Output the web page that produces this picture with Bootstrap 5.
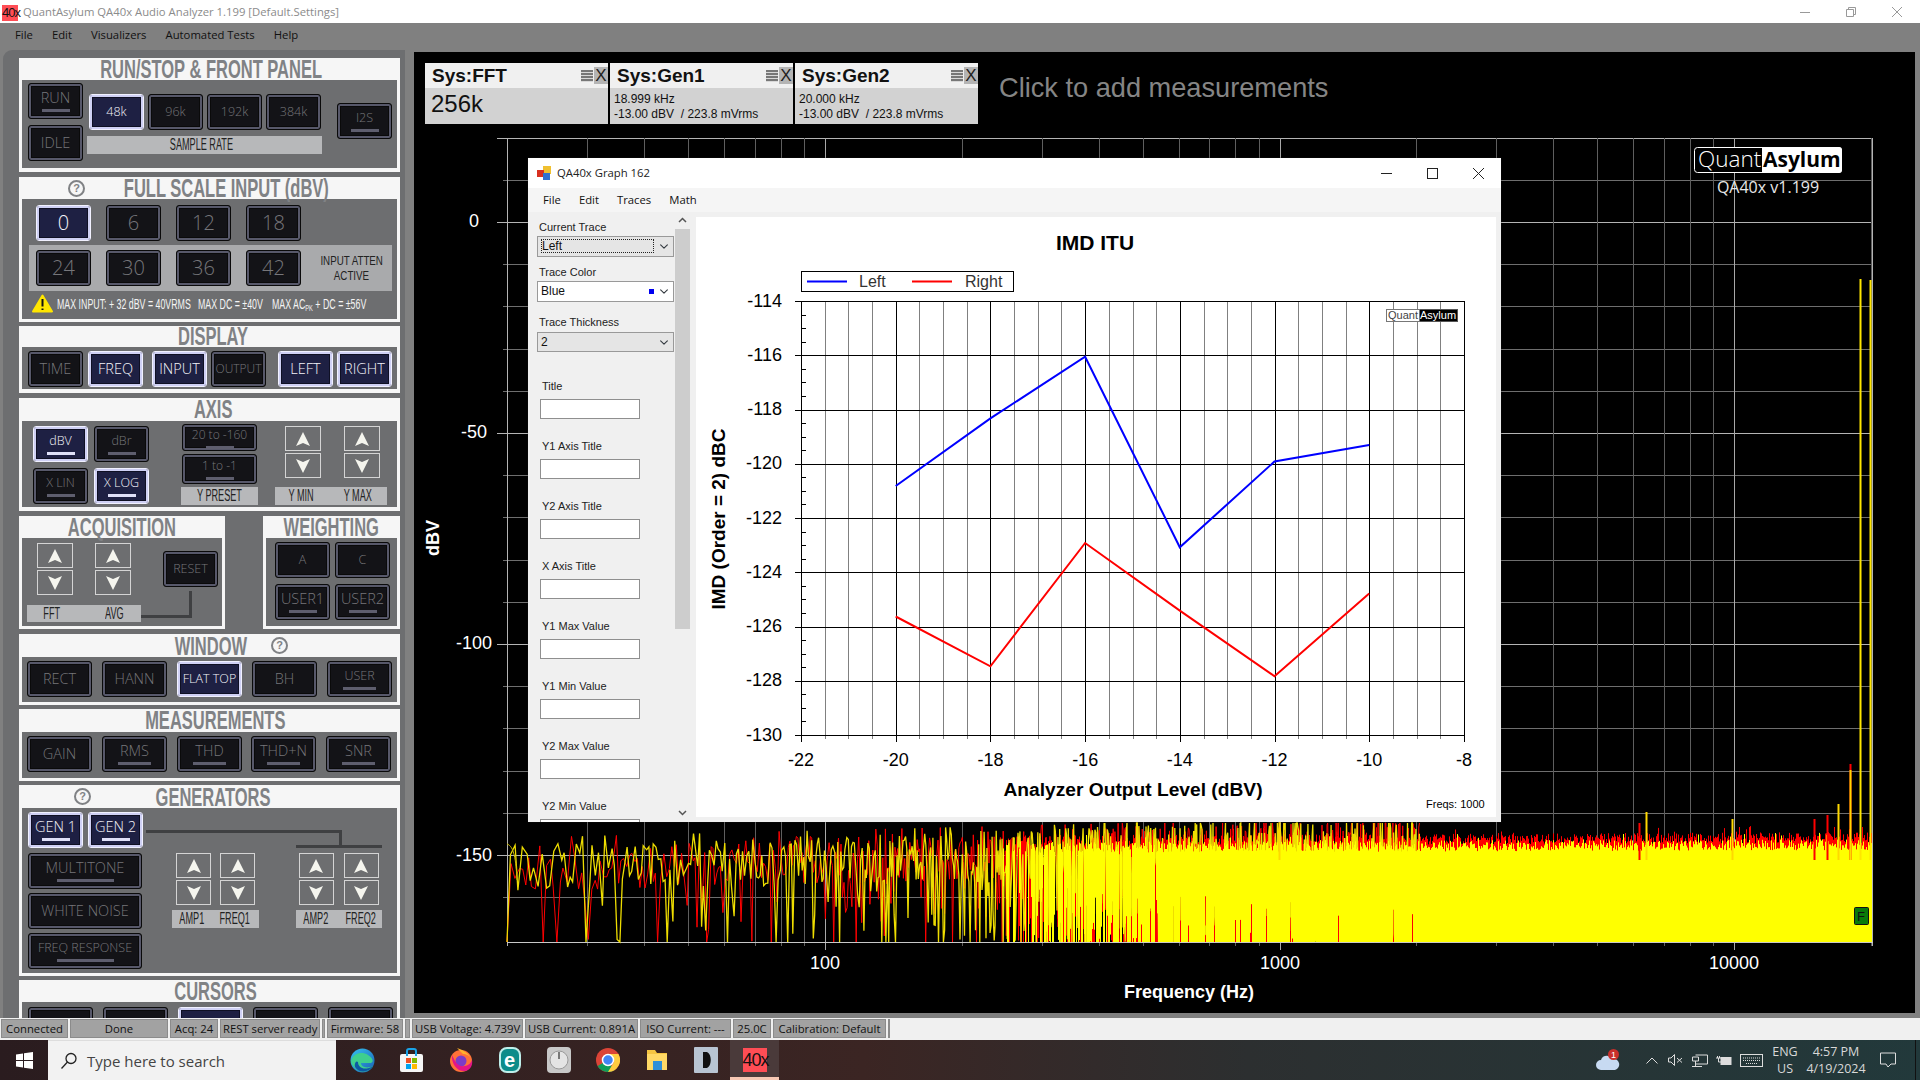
<!DOCTYPE html>
<html lang="en">
<head>
<meta charset="UTF-8">
<title>QuantAsylum QA40x Audio Analyzer</title>
<link href="https://cdn.jsdelivr.net/npm/bootstrap@5.3.0/dist/css/bootstrap.min.css" rel="stylesheet">
<script src="https://cdn.jsdelivr.net/npm/bootstrap@5.3.0/dist/js/bootstrap.bundle.min.js"></script>
<style>
html, body { width: 1920px; height: 1080px; overflow: hidden; margin: 0; }
body { font-family: "Open Sans", "Liberation Sans", sans-serif; font-size: 11.3px; background: #808080; color: #111; line-height: 1.2; }

/* window chrome */
.titlebar { height: 23px; background: #fff; color: #8b8b8b; }
.app-ico { width: 16px; height: 16px; margin: 2px 5px 0 2px; background: #ff4d55; color: #111; font: 13px/16px "Liberation Sans", sans-serif; text-align: center; letter-spacing: -1px; overflow: visible; }
.win-btn { width: 46px; display: flex; justify-content: center; }
.menubar { height: 27px; background: #808080; padding: 0 0 3px 15px; gap: 19px; color: #111; }
.middle { height: 968px; }

/* left panel */
.panel { width: 414px; height: 968px; overflow: hidden; padding-left: 3px; padding-right: 9px; flex: none; }
.pan { height: 100%; background: #6d6e70; border-top-left-radius: 9px; padding: 8px 0 0 16px; }
.sec { width: 381px; background: #f6f6f6; padding: 0 3px 3px; }
.sec + .sec, .sec-row + .sec { margin-top: 4px; }
.sec-row { width: 381px; margin-top: 5px; }
.sec-row .sec { margin-top: 0; }
.ttl { height: 22px; color: #808285; font: 700 25px/22px "Liberation Sans", sans-serif; }
.cond { display: inline-block; white-space: nowrap; transform: scaleX(.66); }
.tc { flex: 1 1 0; min-width: 0; display: flex; justify-content: center; }
.sbody { background: #6d6e70; }
.help { width: 17px; height: 17px; border: 2px solid #808285; border-radius: 50%; color: #808285; font: 700 11px/13px "Liberation Sans", sans-serif; text-align: center; flex: none; }

.btn.qb { width: 55px; height: 36px; padding: 0; flex: none; display: flex; flex-direction: column; align-items: center; justify-content: center;
  background: #131317; border: 1px solid #0a0a0a; border-radius: 3px; box-shadow: inset 0 0 0 2px #57586a, inset 0 0 0 3px #0a0a0a;
  color: #76767a; font: 300 14.5px/16px "Open Sans", "Liberation Sans", sans-serif; white-space: nowrap; }
.btn.qb.on { background: #1e2043; border-color: #f1f1ff; box-shadow: inset 0 0 0 2px #cfd0f4, inset 0 0 0 3px #0f1024; color: #f4f4fa; }
.btn.qb.u::after { content: ""; width: 28px; height: 3px; margin-top: 3px; background: #5e5e6e; }
.btn.qb.on.u::after { background: #dfe0f8; }
.btn.qb.num { font-size: 20px; }
.btn.qb.w65 { width: 65px; }
.btn.qb.w65.u::after { width: 33px; }
.btn.qb.wide { width: 114px; }
.btn.qb.wide.u::after { width: 57px; }
.btn.qb.small { font-size: 12.5px; }
.btn.qb.tiny { font-size: 12px; }
.ar { width: 36px; height: 25px; border: 1px solid #d4d4d4; display: flex; align-items: center; justify-content: center; flex: none; }
.ar svg { width: 16px; height: 16px; fill: #f5f5ee; }
.ar.n { width: 35px; }
.ar-col { display: flex; flex-direction: column; gap: 2px; }
.strip { background: #b7b8ba; height: 18px; color: #222; font: 16px/18px "Liberation Sans", sans-serif; display: flex; }
.strip > span { display: flex; justify-content: center; }
.strip .cond { transform: scaleX(.57); }
.wire { border: 0 solid #3f4042; }

/* individual sections */
#s1 { padding-bottom: 4px; }
#s1 .sbody { height: 88px; padding: 3px 0 0 6px; }
#s1 .ttl { padding-left: 3px; }
#s2 { margin-top: 5px; }
#s2 .ttl { padding-right: 30px; }
#s2 .help { margin-left: 46px; }
#s2 .sbody { height: 120px; padding: 6px 0 0 14px; }
#s2 .atten { width: 363px; height: 46px; margin: 4px 0 0 -7px; padding: 5px 0 0 7px; background: #a9aaac; }
.atten .lab { flex: 1 1 0; min-width: 0; padding: 3px 5px 0 0; color: #222; font: 13px/15px "Liberation Sans", sans-serif; }
.atten .lab div { display: flex; justify-content: center; }
.atten .cond { transform: scaleX(.75); }
.note { margin: 3px 0 0 -4px; height: 20px; color: #f4f4f4; font: 14px/20px "Liberation Sans", sans-serif; }
.note span { display: block; white-space: nowrap; transform: scaleX(.63); transform-origin: left; flex: none; }
.note sub { font-size: 9px; }
#s3 { padding-bottom: 4px; }
#s3 .ttl { height: 21px; line-height: 21px; padding-left: 8px; }
#s3 .sbody { height: 42px; padding: 4px 0 0 6px; }
#s4, .sec-row { margin-top: 5px; }
#s4 { padding-bottom: 4px; }
#s4 .ttl { height: 23px; padding-left: 8px; }
#s4 .sbody { height: 86px; padding: 5px 0 0 11px; }
.s5a { width: 206px; } .s5b { width: 137px; }
.s5a .sbody { height: 88px; padding: 5px 0 0 15px; }
.s5b .sbody { height: 88px; padding: 4px 0 0 9px; }
#s6 { margin-top: 5px; }
#s6 .ttl, #s7 .ttl, #s8 .ttl { height: 23px; }
#s6 .tc { flex: none; width: 290px; padding-left: 88px; }
#s6 .help { margin-left: -41px; }
#s6 .sbody { height: 45px; padding: 4px 0 0 5px; }
#s7 .sbody { height: 46px; padding: 4px 0 0 5px; }
#s8 .sbody { height: 165px; padding: 4px 0 0 6px; }
#s9 .sbody { padding: 5px 0 0 6px; height: 60px; }

/* main area */
.main { width: 1501px; height: 961px; margin-top: 2px; background: #000; position: relative; flex: none; }
.cards { height: 78px; padding: 11px 0 0 11px; gap: 2px; }
.card-m { width: 183px; height: 61px; background: #d2d2d2; color: #111; font-family: "Liberation Sans", sans-serif; }
.card-m .hd { height: 25px; background: #f0f0f0; font: 700 19px/25px "Liberation Sans", sans-serif; padding-left: 7px; }
.card-m .x { width: 14px; height: 17px; background: #b4b4b4; margin-left: 1px; text-align: center; font: 400 17px/17px "Liberation Sans", sans-serif; color: #222; }
.card-m .burger { width: 12px; height: 12px; background: repeating-linear-gradient(#777 0 2px, #d8d8d8 2px 3px); }
.card-m .big { font-size: 24px; line-height: 30px; padding: 1px 0 0 6px; }
.card-m .sm { font-size: 12px; line-height: 15px; padding: 4px 0 0 4px; }
.clickadd { margin: 0 0 0 19px; color: #858585; font: 27.2px/50px "Liberation Sans", sans-serif; height: 50px; }
.spectrum { display: block; width: 1501px; height: 883px; }
svg text { font-family: "Liberation Sans", sans-serif; }

/* floating graph window */
.gwin { position: absolute; left: 114px; top: 106px; width: 973px; height: 664px; background: #f0f0f0; box-shadow: 0 0 1px #222; }
.gwin .gt { height: 30px; background: #fff; padding-left: 9px; color: #222; }
.gwin .gt .ico { margin-right: 6px; }
.gwin .gm { height: 24px; background: #f5f5f5; padding-left: 15px; gap: 18px; color: #111; }
.gpane { width: 146px; height: 610px; overflow: hidden; padding: 8px 0 0 9px; font: 11px/14px "Liberation Sans", sans-serif; color: #222; flex: none; }
.gpane label { display: block; margin: 0 0 0 2px; }
.gpane .form-select.combo { width: 137px; height: 21px; margin: 2px 0 8px; padding: 2px 3px; border: 1px solid #999; border-radius: 0; font: 12px/15px "Liberation Sans", sans-serif; background-color: #e5e5e5; background-position: right 4px center; background-size: 10px 9px; color: #111; }
.gpane .form-select.combo.wh { background-color: #fff; position: relative; margin-bottom: 13px; }
.gpane .form-select.combo.th3 { margin: 3px 0 27px; height: 20px; }
.combo .focus { display: block; width: 113px; height: 14px; border: 1px dotted #222; line-height: 12px; }
.combo .sw { position: absolute; right: 19px; top: 7px; width: 5px; height: 5px; background: #0000f0; }
.gpane .fld { margin: 0 0 0 3px; }
.gpane .form-control { width: 100px; height: 20px; min-height: 0; margin: 6px 0 20px; border: 1px solid #8f8f8f; border-radius: 0; padding: 0; background: #fff; }
.gscroll { width: 15px; height: 610px; margin-left: 1px; flex: none; }
.gscroll .th { height: 400px; margin-top: 0; background: #cdcdcd; }
.gscroll .ch { height: 17px; text-align: center; line-height: 14px; }
.gplot { width: 800px; height: 600px; margin: 5px 0 0 6px; background: #fff; display: block; flex: none; }

/* status + taskbar */
.status { height: 22px; background: #f0f0f0; padding: 1px 0 0 1px; gap: 2px; }
.status span { height: 19px; background: #a2a2a2; border: 1px solid #e4e4e4; outline: 1px solid #8b8b8b; outline-offset: -1px; color: #111; font-size: 11.3px; line-height: 17px; padding: 0 2px; white-space: nowrap; text-align: center; flex: none; }
.taskbar { height: 40px; background: linear-gradient(90deg, #2a1c1f 0, #3b2523 45%, #2c2f30 65%, #22393b 100%); color: #eee; }
.t-start { width: 48px; }
.t-search { width: 288px; background: #f2f2f2; color: #444; font-size: 15px; padding-left: 12px; gap: 9px; border-top: 1px solid #ddd; }
.t-ico { width: 49px; height: 40px; display: flex; align-items: center; justify-content: center; flex: none; }
.t-ico.cur { background: #4a3a3a; border-bottom: 3px solid #f7c8b4; padding-top: 3px; }
.t-40x { width: 24px; height: 24px; background: #ff4d55; color: #111; font: 18px/24px "Liberation Sans", sans-serif; text-align: center; letter-spacing: -1px; }
.tray { margin-left: auto; width: 321px; border-right: 1px solid #111; margin-right: 4px; font-size: 12.5px; line-height: 17px; text-align: center; color: #d8d8d8; flex: none; }
.tray > * { flex: none; }
</style>
</head>
<body>
<svg width="0" height="0" class="d-block position-absolute">
  <symbol id="up" viewBox="0 0 16 16"><path d="M8 1 L15 15 L8 12 L1 15Z"/></symbol>
  <symbol id="dn" viewBox="0 0 16 16"><path d="M8 15 L15 1 L8 4 L1 1Z"/></symbol>
</svg>

<div class="titlebar d-flex align-items-center">
  <div class="app-ico">40x</div>
  <div class="flex-grow-1">QuantAsylum QA40x Audio Analyzer 1.199 [Default.Settings]</div>
  <div class="win-btn"><svg width="10" height="10"><path d="M0 5.5H10" stroke="#999"/></svg></div>
  <div class="win-btn"><svg width="10" height="10" fill="none" stroke="#999"><path d="M.5 2.5h7v7h-7zM2.5 2.5v-2h7v7h-2"/></svg></div>
  <div class="win-btn"><svg width="10" height="10" stroke="#999"><path d="M0 0L10 10M10 0L0 10"/></svg></div>
</div>
<div class="menubar d-flex align-items-center"><span>File</span><span>Edit</span><span>Visualizers</span><span>Automated Tests</span><span>Help</span></div>

<div class="middle d-flex">
  <div class="panel">
    <div class="pan">
      <div class="sec" id="s1">
        <div class="ttl d-flex justify-content-center"><span class="cond">RUN/STOP &amp; FRONT PANEL</span></div>
        <div class="sbody d-flex">
          <div class="d-flex flex-column" style="gap:6px">
            <button class="btn qb u">RUN</button>
            <button class="btn qb">IDLE</button>
          </div>
          <div style="margin:11px 0 0 6px">
            <div class="d-flex" style="gap:4px">
              <button class="btn qb small on">48k</button>
              <button class="btn qb small">96k</button>
              <button class="btn qb small">192k</button>
              <button class="btn qb small">384k</button>
            </div>
            <div class="strip justify-content-center" style="width:235px;margin:6px 0 0 -2px;padding-right:6px"><span class="cond">SAMPLE RATE</span></div>
          </div>
          <button class="btn qb small u" style="margin:20px 0 0 15px">I2S</button>
        </div>
      </div>

      <div class="sec" id="s2">
        <div class="ttl d-flex align-items-center"><div class="help">?</div><div class="tc"><span class="cond">FULL SCALE INPUT (dBV)</span></div></div>
        <div class="sbody">
          <div class="d-flex" style="gap:15px">
            <button class="btn qb num on">0</button>
            <button class="btn qb num">6</button>
            <button class="btn qb num">12</button>
            <button class="btn qb num">18</button>
          </div>
          <div class="atten d-flex" style="gap:15px">
            <button class="btn qb num">24</button>
            <button class="btn qb num">30</button>
            <button class="btn qb num">36</button>
            <button class="btn qb num">42</button>
            <div class="lab"><div><span class="cond">INPUT ATTEN</span></div><div><span class="cond">ACTIVE</span></div></div>
          </div>
          <div class="note d-flex">
            <svg width="21" height="19" viewBox="0 0 21 19" class="flex-none"><path d="M10.5 1.5 L20 17.5 H1Z" fill="#ffe600" stroke="#ffe600" stroke-width="2" stroke-linejoin="round"/><path d="M10.5 5V12.5M10.5 14.5V16" stroke="#111" stroke-width="2"/></svg>
            <span style="width:127px;margin-left:4px">MAX INPUT: + 32 dBV = 40VRMS</span>
            <span style="width:61px;margin-left:14px">MAX DC = ±40V</span>
            <span style="width:89px;margin-left:13px">MAX AC<sub>PK</sub> + DC = ±56V</span>
          </div>
        </div>
      </div>

      <div class="sec" id="s3">
        <div class="ttl d-flex justify-content-center"><span class="cond">DISPLAY</span></div>
        <div class="sbody d-flex">
          <button class="btn qb">TIME</button>
          <button class="btn qb on" style="margin-left:5px">FREQ</button>
          <button class="btn qb on" style="margin-left:9px">INPUT</button>
          <button class="btn qb tiny" style="margin-left:4px">OUTPUT</button>
          <button class="btn qb on" style="margin-left:12px">LEFT</button>
          <button class="btn qb on" style="margin-left:4px">RIGHT</button>
        </div>
      </div>

      <div class="sec" id="s4">
        <div class="ttl d-flex justify-content-center"><span class="cond">AXIS</span></div>
        <div class="sbody d-flex">
          <div class="d-flex flex-column" style="gap:6px">
            <div class="d-flex" style="gap:6px"><button class="btn qb small u on">dBV</button><button class="btn qb small u">dBr</button></div>
            <div class="d-flex" style="gap:6px"><button class="btn qb small u">X LIN</button><button class="btn qb small u on">X LOG</button></div>
          </div>
          <div style="width:77px;margin:-2px 0 0 32px">
            <button class="btn qb tiny u" style="width:75px;height:27px;margin-left:1px">20 to -160</button>
            <button class="btn qb tiny u" style="width:75px;height:30px;margin:3px 0 0 1px">1 to -1</button>
            <div class="strip justify-content-center" style="margin-top:3px"><span class="cond">Y PRESET</span></div>
          </div>
          <div style="width:112px;margin-left:17px">
            <div class="d-flex" style="gap:23px;padding-left:10px">
              <div class="ar-col"><div class="ar"><svg><use href="#up"/></svg></div><div class="ar"><svg><use href="#dn"/></svg></div></div>
              <div class="ar-col"><div class="ar"><svg><use href="#up"/></svg></div><div class="ar"><svg><use href="#dn"/></svg></div></div>
            </div>
            <div class="strip" style="margin-top:9px;gap:5px"><span style="width:52px"><span class="cond">Y MIN</span></span><span style="width:52px"><span class="cond">Y MAX</span></span></div>
          </div>
        </div>
      </div>

      <div class="sec-row d-flex justify-content-between">
        <div class="sec s5a">
          <div class="ttl d-flex justify-content-center"><span class="cond">ACQUISITION</span></div>
          <div class="sbody d-flex">
            <div>
              <div class="d-flex" style="gap:22px">
                <div class="ar-col"><div class="ar"><svg><use href="#up"/></svg></div><div class="ar"><svg><use href="#dn"/></svg></div></div>
                <div class="ar-col"><div class="ar"><svg><use href="#up"/></svg></div><div class="ar"><svg><use href="#dn"/></svg></div></div>
              </div>
              <div class="strip" style="width:114px;margin:10px 0 0 -10px;height:17px;gap:12px"><span style="width:50px"><span class="cond">FFT</span></span><span style="width:50px"><span class="cond">AVG</span></span></div>
            </div>
            <div style="margin:8px 0 0 22px">
              <button class="btn qb small">RESET</button>
              <div class="wire" style="width:51px;height:27px;margin:4px 0 0 -22px;border-right-width:3px;border-bottom-width:3px"></div>
            </div>
          </div>
        </div>
        <div class="sec s5b">
          <div class="ttl d-flex justify-content-center"><span class="cond">WEIGHTING</span></div>
          <div class="sbody">
            <div class="d-flex" style="gap:5px"><button class="btn qb small">A</button><button class="btn qb small">C</button></div>
            <div class="d-flex" style="gap:5px;margin-top:6px"><button class="btn qb u">USER1</button><button class="btn qb u">USER2</button></div>
          </div>
        </div>
      </div>

      <div class="sec" id="s6">
        <div class="ttl d-flex align-items-center"><div class="tc"><span class="cond">WINDOW</span></div><div class="help">?</div></div>
        <div class="sbody d-flex" style="gap:10px">
          <button class="btn qb w65">RECT</button>
          <button class="btn qb w65">HANN</button>
          <button class="btn qb w65 small on">FLAT TOP</button>
          <button class="btn qb w65">BH</button>
          <button class="btn qb w65 small u">USER</button>
        </div>
      </div>

      <div class="sec" id="s7">
        <div class="ttl d-flex justify-content-center" style="padding-left:12px"><span class="cond">MEASUREMENTS</span></div>
        <div class="sbody d-flex" style="gap:10px">
          <button class="btn qb w65">GAIN</button>
          <button class="btn qb w65 u">RMS</button>
          <button class="btn qb w65 u">THD</button>
          <button class="btn qb w65 u" style="margin-left:-1px">THD+N</button>
          <button class="btn qb w65 u">SNR</button>
        </div>
      </div>

      <div class="sec" id="s8">
        <div class="ttl d-flex align-items-center"><div class="help" style="margin-left:52px">?</div><div class="tc" style="padding-right:62px"><span class="cond">GENERATORS</span></div></div>
        <div class="sbody d-flex">
          <div class="d-flex flex-column" style="gap:4px;width:114px">
            <div class="d-flex" style="gap:5px;margin-bottom:1px"><button class="btn qb u on">GEN 1</button><button class="btn qb u on">GEN 2</button></div>
            <button class="btn qb wide u">MULTITONE</button>
            <button class="btn qb wide">WHITE NOISE</button>
            <button class="btn qb wide small u">FREQ RESPONSE</button>
          </div>
          <div style="width:236px;margin-left:4px">
            <div class="wire" style="width:196px;height:15px;margin-top:18px;border-top-width:3px;border-right-width:3px"></div>
            <div class="wire" style="width:86px;margin-left:150px;border-top-width:3px"></div>
            <div class="d-flex" style="margin:5px 0 0 26px;gap:37px">
              <div style="width:87px">
                <div class="d-flex" style="gap:9px;padding-left:4px">
                  <div class="ar-col"><div class="ar n"><svg><use href="#up"/></svg></div><div class="ar n"><svg><use href="#dn"/></svg></div></div>
                  <div class="ar-col"><div class="ar n"><svg><use href="#up"/></svg></div><div class="ar n"><svg><use href="#dn"/></svg></div></div>
                </div>
                <div class="strip" style="margin-top:5px;gap:3px"><span style="width:40px"><span class="cond">AMP1</span></span><span style="width:40px"><span class="cond">FREQ1</span></span></div>
              </div>
              <div style="width:87px">
                <div class="d-flex" style="gap:10px;padding-left:3px">
                  <div class="ar-col"><div class="ar n"><svg><use href="#up"/></svg></div><div class="ar n"><svg><use href="#dn"/></svg></div></div>
                  <div class="ar-col"><div class="ar n"><svg><use href="#up"/></svg></div><div class="ar n"><svg><use href="#dn"/></svg></div></div>
                </div>
                <div class="strip" style="margin-top:5px;gap:5px"><span style="width:40px"><span class="cond">AMP2</span></span><span style="width:40px"><span class="cond">FREQ2</span></span></div>
              </div>
            </div>
          </div>
        </div>
      </div>

      <div class="sec" id="s9">
        <div class="ttl d-flex justify-content-center" style="padding-left:12px"><span class="cond">CURSORS</span></div>
        <div class="sbody d-flex" style="gap:10px">
          <button class="btn qb w65"></button>
          <button class="btn qb w65"></button>
          <button class="btn qb w65 on"></button>
          <button class="btn qb w65"></button>
          <button class="btn qb w65"></button>
        </div>
      </div>
    </div>
  </div>

  <div class="main">
    <div class="cards d-flex align-items-start">
      <div class="card-m">
        <div class="hd d-flex align-items-center"><span class="flex-grow-1">Sys:FFT</span><span class="burger"></span><span class="x">X</span></div>
        <div class="big">256k</div>
      </div>
      <div class="card-m">
        <div class="hd d-flex align-items-center"><span class="flex-grow-1">Sys:Gen1</span><span class="burger"></span><span class="x">X</span></div>
        <div class="sm">18.999 kHz<br>-13.00 dBV &nbsp;/ 223.8 mVrms</div>
      </div>
      <div class="card-m">
        <div class="hd d-flex align-items-center"><span class="flex-grow-1">Sys:Gen2</span><span class="burger"></span><span class="x">X</span></div>
        <div class="sm">20.000 kHz<br>-13.00 dBV &nbsp;/ 223.8 mVrms</div>
      </div>
      <div class="clickadd">Click to add measurements</div>
    </div>

    <svg class="spectrum" viewBox="414 130 1501 883">
      <g id="specGrid"></g>
      <g id="specTrace"></g>
      <g fill="#fff" font-size="18" text-anchor="middle">
        <text x="474" y="227">0</text>
        <text x="474" y="438">-50</text>
        <text x="474" y="649">-100</text>
        <text x="474" y="861">-150</text>
        <text x="825" y="969">100</text>
        <text x="1280" y="969">1000</text>
        <text x="1734" y="969">10000</text>
        <text x="1189" y="998" font-weight="700">Frequency (Hz)</text>
        <text transform="rotate(-90 439 538)" x="439" y="538" font-weight="700">dBV</text>
      </g>
      <g>
        <rect x="1694.500" y="147.500" width="147" height="25" rx="3" fill="#000" stroke="#fff"/>
        <path d="M1762 147h77a3 3 0 0 1 3 3v20a3 3 0 0 1 -3 3h-77z" fill="#fff"/>
        <text x="1698" y="167" fill="#fff" font-size="22.500" style="font-family:'Open Sans',sans-serif;font-weight:300">Quant</text>
        <text x="1763" y="167" fill="#000" font-size="21" font-weight="700" style="font-family:'Open Sans',sans-serif">Asylum</text>
        <text x="1768" y="193" fill="#e8e8e8" font-size="16" text-anchor="middle" style="font-family:'Open Sans',sans-serif">QA40x v1.199</text>
      </g>
      <rect x="1854.500" y="907.500" width="14" height="17" rx="1" fill="#0a7a0a" stroke="#111"/>
      <text x="1857" y="921" font-size="13" fill="#111">F</text>
    </svg>

    <div class="gwin">
      <div class="gt d-flex align-items-center">
        <svg width="14" height="14" viewBox="0 0 14 14" class="ico"><rect x="6" width="8" height="8" fill="#f0c030"/><rect y="4" width="7" height="7" fill="#d83020"/><rect x="6" y="7" width="7" height="7" fill="#3070d0"/></svg>
        <span class="flex-grow-1">QA40x Graph 162</span>
        <div class="win-btn"><svg width="11" height="11"><path d="M0 5.500H11" stroke="#222"/></svg></div>
        <div class="win-btn"><svg width="11" height="11" fill="none" stroke="#222"><rect x=".5" y=".5" width="10" height="10"/></svg></div>
        <div class="win-btn"><svg width="11" height="11" stroke="#222"><path d="M0 0L11 11M11 0L0 11"/></svg></div>
      </div>
      <div class="gm d-flex align-items-center"><span>File</span><span>Edit</span><span>Traces</span><span>Math</span></div>
      <div class="d-flex">
        <div class="gpane">
          <label>Current Trace</label>
          <div class="form-select combo"><span class="focus">Left</span></div>
          <label>Trace Color</label>
          <div class="form-select combo wh">Blue<span class="sw"></span></div>
          <label>Trace Thickness</label>
          <div class="form-select combo th3">2</div>
          <div class="fld"><label>Title</label><input class="form-control"></div>
          <div class="fld"><label>Y1 Axis Title</label><input class="form-control"></div>
          <div class="fld"><label>Y2 Axis Title</label><input class="form-control"></div>
          <div class="fld"><label>X Axis Title</label><input class="form-control"></div>
          <div class="fld"><label>Y1 Max Value</label><input class="form-control"></div>
          <div class="fld"><label>Y1 Min Value</label><input class="form-control"></div>
          <div class="fld"><label>Y2 Max Value</label><input class="form-control"></div>
          <div class="fld"><label>Y2 Min Value</label><input class="form-control"></div>
        </div>
        <div class="gscroll d-flex flex-column">
          <div class="ch"><svg width="9" height="6" fill="none" stroke="#555" stroke-width="1.500"><path d="M1 5L4.500 1.500L8 5"/></svg></div>
          <div class="th"></div>
          <div class="flex-grow-1"></div>
          <div class="ch"><svg width="9" height="6" fill="none" stroke="#555" stroke-width="1.500"><path d="M1 1L4.500 4.500L8 1"/></svg></div>
        </div>
        <svg class="gplot" viewBox="696 217 800 600">
          <g id="imdGrid"></g>
          <polyline fill="none" stroke="#0000ff" stroke-width="2" points="895.700,486 990.400,418.400 1085.100,356.700 1179.800,547.300 1274.500,461.500 1369.200,444.900"/>
          <polyline fill="none" stroke="#ff0000" stroke-width="2" points="895.700,616.500 990.400,666.300 1085.100,543 1179.800,610.600 1274.500,676.200 1369.200,593.600"/>
          <g fill="#000">
            <text x="1095" y="250" font-size="21" font-weight="700" text-anchor="middle">IMD ITU</text>
            <text x="1133" y="796" font-size="19.200" font-weight="700" text-anchor="middle">Analyzer Output Level (dBV)</text>
            <text transform="rotate(-90 725 519)" x="725" y="519" font-size="19" font-weight="700" text-anchor="middle">IMD (Order = 2) dBC</text>
            <text x="1426" y="808" font-size="11">Freqs: 1000</text>
          </g>
          <rect x="801.500" y="271.500" width="212" height="20" fill="#fff" stroke="#000"/>
          <path d="M807 281.500H847" stroke="#0000ff" stroke-width="2"/>
          <path d="M912 281.500H952" stroke="#ff0000" stroke-width="2"/>
          <text x="859" y="287" font-size="16" fill="#333">Left</text>
          <text x="965" y="287" font-size="16" fill="#333">Right</text>
          <rect x="1386.500" y="309.500" width="71" height="12" fill="#000" stroke="#555"/>
          <rect x="1386.500" y="309.500" width="33" height="12" fill="#fff" stroke="#777"/>
          <text x="1388" y="319" font-size="11" fill="#444">Quant</text>
          <text x="1420" y="319" font-size="11" fill="#fff">Asylum</text>
        </svg>
      </div>
    </div>
  </div>
</div>

<div class="status d-flex">
  <span style="width:67px">Connected</span>
  <span style="width:98px">Done</span>
  <span style="width:48px">Acq: 24</span>
  <span style="width:100px">REST server ready</span>
  <span style="width:3px;padding:0"></span>
  <span style="width:76px">Firmware: 58</span>
  <span style="width:5px;padding:0"></span>
  <span style="width:111px">USB Voltage: 4.739V</span>
  <span style="width:113px">USB Current: 0.891A</span>
  <span style="width:91px">ISO Current: ---</span>
  <span style="width:38px">25.0C</span>
  <span style="width:113px">Calibration: Default</span>
  <span style="width:2px;padding:0"></span>
</div>

<div class="taskbar d-flex">
  <div class="t-start d-flex align-items-center justify-content-center">
    <svg width="17" height="17" viewBox="0 0 17 17" fill="#fff"><path d="M0 2.400L7 1.400V8H0zM8 1.300L17 0V8H8zM0 9H7V15.600L0 14.600zM8 9H17V17L8 15.700z"/></svg>
  </div>
  <div class="t-search d-flex align-items-center">
    <svg width="18" height="18" viewBox="0 0 18 18" fill="none" stroke="#222" stroke-width="1.300"><circle cx="11" cy="6.500" r="5"/><path d="M7.500 10L1.500 16.500"/></svg>
    <span>Type here to search</span>
  </div>
  <div style="width:2px"></div>
  <div class="t-ico"><svg width="25" height="25" viewBox="0 0 25 25"><defs><linearGradient id="eg" x1="0" y1="0" x2="1" y2="1"><stop offset="0" stop-color="#35c1f1"/><stop offset="1" stop-color="#1b5fb4"/></linearGradient></defs><circle cx="12.500" cy="12.500" r="12" fill="url(#eg)"/><path d="M1 13C3 5 12 3 18 7C23 10 24 14 21 15H11C11 19 17 21 23 18C20 24 10 26 5 20C3 18 1 16 1 13Z" fill="#3ecf8e"/><path d="M8 14C8 20 15 23 23 18C20 24 9 26 5 19C4 16 6 12 8 14Z" fill="#0c59a4"/></svg></div>
  <div class="t-ico"><svg width="25" height="25" viewBox="0 0 25 25"><rect x="1" y="6" width="23" height="18" rx="2" fill="#f6f6f6"/><path d="M8 8V3a2 2 0 0 1 2-2h5a2 2 0 0 1 2 2v5" fill="none" stroke="#1aa3e8" stroke-width="2"/><rect x="7" y="10" width="5" height="5" fill="#f25022"/><rect x="13" y="10" width="5" height="5" fill="#7fba00"/><rect x="7" y="16" width="5" height="5" fill="#00a4ef"/><rect x="13" y="16" width="5" height="5" fill="#ffb900"/></svg></div>
  <div class="t-ico"><svg width="24" height="26" viewBox="0 0 24 26"><circle cx="12" cy="14" r="11" fill="#ff7139"/><path d="M8 1C15 3 22 8 23 14C22 9 18 7 14 7Z" fill="#ffb32c"/><circle cx="12" cy="14" r="5.500" fill="#7d3bc8"/><path d="M3 8C2 16 8 25 16 24C22 23 24 17 23 13C21 20 10 22 6 14Z" fill="#e31587"/></svg></div>
  <div class="t-ico"><div class="d-flex align-items-center justify-content-center" style="width:22px;height:26px;border-radius:8px;background:#0d8c8a;border:2px solid #bfeeea;color:#fff;font:700 20px/1 'Liberation Sans',sans-serif">e</div></div>
  <div class="t-ico"><svg width="24" height="26" viewBox="0 0 24 26"><rect width="24" height="26" rx="4" fill="#c8c8c8"/><circle cx="12" cy="13" r="9" fill="#e4e4e4" stroke="#999"/><path d="M12 5V12" stroke="#777" stroke-width="2"/></svg></div>
  <div class="t-ico"><svg width="24" height="24" viewBox="0 0 24 24"><circle cx="12" cy="12" r="12" fill="#db4437"/><path d="M12 12L1.600 18A12 12 0 0 0 18 22.400Z" fill="#0f9d58"/><path d="M12 6H22.400A12 12 0 0 1 12 24L18 14Z" fill="#ffcd40"/><circle cx="12" cy="12" r="5.500" fill="#4285f4" stroke="#fff" stroke-width="1.500"/></svg></div>
  <div class="t-ico"><svg width="22" height="24" viewBox="0 0 22 24"><path d="M1 2H9L11 5H21V22H1Z" fill="#f5c542"/><path d="M1 6H21V22H1Z" fill="#ffd966"/><rect x="7" y="13" width="9" height="9" fill="#2f8fd8"/></svg></div>
  <div class="t-ico"><svg width="24" height="26" viewBox="0 0 24 26"><rect width="24" height="26" rx="1" fill="#b8c4d2"/><path d="M9 5H13C18 7 18 19 13 21H9Z" fill="#111"/></svg></div>
  <div class="t-ico cur"><div class="t-40x">40x</div></div>
  <div class="tray d-flex align-items-center">
    <svg width="24" height="22" viewBox="0 0 24 22" style="margin-left:1px"><path d="M5 21a5 5 0 0 1 0-10C6 6 14 5 16 10a5 5 0 0 1 3 11Z" fill="#c7daf2"/><circle cx="17.500" cy="5.500" r="5.500" fill="#c8302c"/><text x="17.500" y="9" font-size="9" fill="#fff" text-anchor="middle">1</text></svg>
    <svg width="12" height="7" viewBox="0 0 12 7" fill="none" stroke="#ddd" style="margin-left:26px"><path d="M.5 6.500L6 1L11.500 6.500"/></svg>
    <svg width="15" height="12" viewBox="0 0 15 12" fill="none" stroke="#ddd" style="margin-left:10px"><path d="M.5 4H3L6.500.5V11.500L3 8H.5ZM9 4L14 8.500M14 4L9 8.500"/></svg>
    <svg width="16" height="13" viewBox="0 0 16 13" fill="none" stroke="#ddd" style="margin-left:9px"><path d="M3.500 1H15.500V10H3.500M.5 3H6.500V7H.5ZM3.500 7V12.500M0 12.500H10"/></svg>
    <svg width="16" height="11" viewBox="0 0 16 11" style="margin-left:8px"><rect x="5" y="2.500" width="10" height="7" fill="#ddd" stroke="#ddd"/><path d="M0 3H5M1.500 1V3M3.500 1V3M2.500 3V7H5" fill="none" stroke="#ddd"/></svg>
    <svg width="23" height="13" viewBox="0 0 23 13" fill="none" stroke="#ddd" style="margin-left:8px"><rect x=".5" y=".5" width="22" height="12"/><path d="M3 4H20M3 6.500H20M6 9.500H17" stroke-dasharray="1 1"/></svg>
    <div style="width:30px;margin-left:7px">ENG<br>US</div>
    <div style="width:62px;margin-left:5px">4:57 PM<br>4/19/2024</div>
    <svg width="16" height="16" viewBox="0 0 16 16" fill="none" stroke="#ddd" style="margin-left:13px"><path d="M.5 1H15.500V12H11L8 15L6 12H.5Z"/></svg>
  </div>
</div>

<script>
  // small seeded generator so the noise floor stays the same on every load
  function rng(seed) {
    return function () {
      seed |= 0; seed = seed + 0x6D2B79F5 | 0;
      let t = Math.imul(seed ^ seed >>> 15, 1 | seed);
      t = t + Math.imul(t ^ t >>> 7, 61 | t) ^ t;
      return ((t ^ t >>> 14) >>> 0) / 4294967296;
    };
  }
  function line(x1, y1, x2, y2, c) {
    return `<path d="M${x1} ${y1}L${x2} ${y2}" stroke="${c}"/>`;
  }

  // spectrum grid
  const fx = f => 825 + 454.5 * Math.log10(f / 100);
  let g = "";
  for (let k = -2; k < 17; k++) {
    const y = Math.round(222 + 42.2 * k) + .5;
    const major = k % 5 == 0 || k == -2;
    g += line(497 + (major ? 0 : 6), y, 1872, y, major ? "#b4b4b4" : "#6e6e6e");
  }
  for (const dec of [10, 100, 1000, 10000]) {
    for (let m = 1; m < 10; m++) {
      const f = dec * m;
      if (f < 20 || f > 20000) continue;
      const x = Math.round(fx(f)) + .5;
      const major = m == 1;
      g += line(x, 138, x, 942 + (major ? 8 : 4), major ? "#a8a8a8" : "#5e5e5e");
    }
  }
  g += line(507.5, 138, 507.5, 946, "#b4b4b4") + line(1872.5, 138, 1872.5, 946, "#b4b4b4") + line(507, 942.5, 1873, 942.5, "#c8c8c8");
  document.getElementById("specGrid").innerHTML = g;

  // noise floor: zigzag at the low end, solid sticks toward high frequency
  function zigzag(seed, color, width) {
    const r = rng(seed);
    let x = 507, pts = [];
    while (x < 1420) {
      const t = (x - 507) / 913;
      const base = 868 - 22 * t;
      let y = base + (r() - .5) * (46 + 12 * t);
      if (r() < .12 + .2 * t) y = base + 30 + r() * 70;
      if (r() < .03) y = base - 30;
      pts.push(x.toFixed(1) + "," + Math.max(823, Math.min(942, y)).toFixed(1));
      x += .7 + 3.2 * Math.pow(1 - t, 3) * (.6 + r() * .8);
    }
    return `<polyline fill="none" stroke="${color}" stroke-width="${width}" points="${pts.join(" ")}"/>`;
  }
  function sticks(seed, color, lift) {
    const r = rng(seed);
    let d = "";
    for (let x = 1000; x < 1872; x++) {
      const t = (x - 1000) / 872;
      // columns fill in quickly, the notches at the bottom taper off around 2 kHz
      if (r() > .45 + t * 3) continue;
      const top = 849 - lift - r() * 11 - (r() < .06 ? 7 : 0) - 3 * t;
      const p = .6 * Math.pow(Math.max(0, 1 - t / .55), 2);
      const bottom = r() < p ? 942 - r() * 60 * (1 - t) : 942;
      d += `M${x + .5} ${top.toFixed(1)}V${bottom.toFixed(1)}`;
    }
    return `<path d="${d}" stroke="${color}" fill="none"/>`;
  }
  function spike(x, top, c) {
    return line(x + .5, top, x + .5, 860, c).replace("/>", ' stroke-width="2"/>');
  }
  let tr = zigzag(7, "#ff0000", 1) + sticks(11, "#ff0000", 3) + zigzag(23, "#eedd00", 1.3) + sticks(31, "#ffff00", -4);
  tr += `<path d="M507 844C514 846 516 860 517 880" stroke="#c8b800" fill="none"/>`;
  tr += spike(1850, 764, "#ff0000") + spike(1850, 770, "#ffd800");
  tr += spike(1860, 279, "#ffe600") + spike(1870, 280, "#ffe600");
  tr += spike(1838, 804, "#ffd800") + spike(1827, 815, "#ff0000") + spike(1814, 819, "#ff0000");
  tr += spike(1732, 819, "#ffd800") + spike(1646, 812, "#ffd800") + spike(1639, 823, "#ff0000") + spike(1279, 822, "#ffd800");
  document.getElementById("specTrace").innerHTML = tr;

  // IMD graph grid: 4 minor steps per 2 dB on both axes
  const L = 801, R = 1464, T = 301, B = 735, sx = (R - L) / 28, sy = (B - T) / 32;
  let h = "";
  for (let i = 0; i <= 28; i++) {
    const x = Math.round(L + sx * i) + .5, major = i % 4 == 0;
    h += line(x, T, x, B + (major ? 7 : 4), major ? "#000" : "#808080");
  }
  for (let i = 0; i <= 32; i++) {
    const y = Math.round(T + sy * i) + .5;
    if (i % 4 == 0) h += line(L - 6, y, R, y, "#000");
    else h += line(L, y, L + 5, y, "#000");
  }
  for (let i = 0; i <= 8; i++) {
    const y = T + sy * i * 4;
    h += `<text x="782" y="${y + 5.5}" font-size="18" text-anchor="end">${-114 - 2 * i}</text>`;
  }
  for (let i = 0; i <= 7; i++) {
    h += `<text x="${L + sx * i * 4}" y="766" font-size="18" text-anchor="middle">${-22 + 2 * i}</text>`;
  }
  document.getElementById("imdGrid").innerHTML = h;
</script>
</body>
</html>
